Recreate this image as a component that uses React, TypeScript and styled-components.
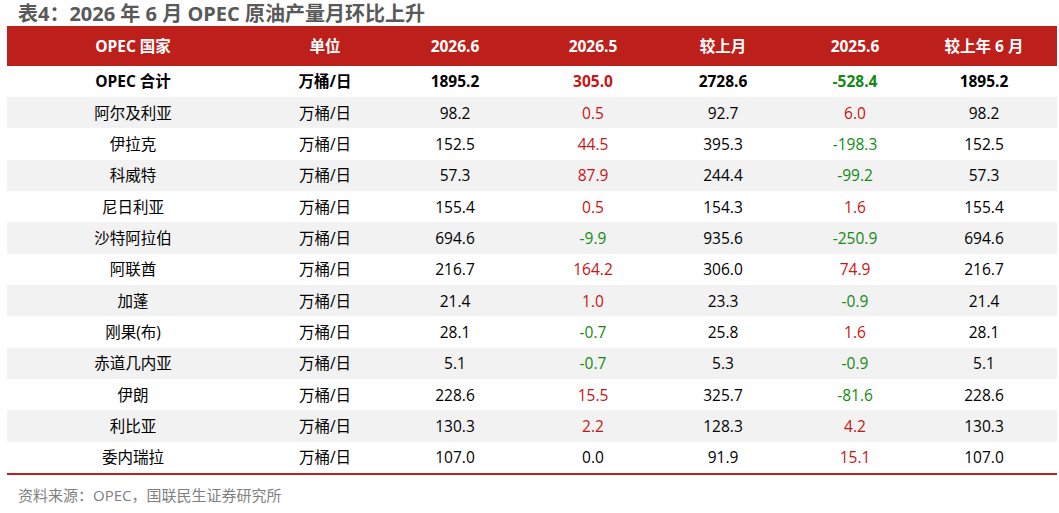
import styled, { createGlobalStyle } from 'styled-components';

const GlobalStyle = createGlobalStyle`
  html, body {
    margin: 0;
    padding: 0;
    background: #ffffff;
  }
  body {
    font-family: "Open Sans", "Noto Sans CJK SC", sans-serif;
  }
`;

const Page = styled.div`
  width: 1059px;
  height: 513px;
  padding: 2px 2px 0 7px;
  box-sizing: border-box;
`;

const Title = styled.h1`
  margin: 0 0 0 11px;
  height: 24px;
  font-size: 20px;
  line-height: 24px;
  font-weight: 700;
  color: #595959;
  white-space: nowrap;
`;

const Table = styled.div`
  width: 1050px;
  border-bottom: 2px solid #c0201b;
`;

const Row = styled.div<{ $shade?: boolean; $head?: boolean }>`
  display: grid;
  grid-template-columns: 252px 132px 128px 148px 112px 152px 106px;
  padding-right: 20px;
  align-items: center;
  height: ${p => (p.$head ? '39.5px' : '31.35px')};
  background: ${p => (p.$head ? '#bd201b' : p.$shade ? '#f2f2f2' : '#ffffff')};
  color: ${p => (p.$head ? '#ffffff' : '#000000')};
  font-weight: ${p => (p.$head ? 700 : 400)};
`;

type Tone = 'up' | 'down' | 'plain';

const Cell = styled.div<{ $tone?: Tone; $bold?: boolean }>`
  text-align: center;
  font-size: 15.5px;
  line-height: 20px;
  white-space: nowrap;
  font-weight: ${p => (p.$bold ? 700 : 'inherit')};
  color: ${p => (p.$tone === 'up' ? '#c81414' : p.$tone === 'down' ? '#138a13' : 'inherit')};
`;

const Source = styled.div`
  margin: 10px 0 0 11px;
  font-size: 15px;
  line-height: 20px;
  color: #7f7f7f;
`;

const headers = ['OPEC 国家', '单位', '2026.6', '2026.5', '较上月', '2025.6', '较上年 6 月'];

type Line = [string, string, string, string, string, string];

const total: Line = ['OPEC 合计', '1895.2', '305.0', '2728.6', '-528.4', '1895.2'];

const rows: Line[] = [
  ['阿尔及利亚', '98.2', '0.5', '92.7', '6.0', '98.2'],
  ['伊拉克', '152.5', '44.5', '395.3', '-198.3', '152.5'],
  ['科威特', '57.3', '87.9', '244.4', '-99.2', '57.3'],
  ['尼日利亚', '155.4', '0.5', '154.3', '1.6', '155.4'],
  ['沙特阿拉伯', '694.6', '-9.9', '935.6', '-250.9', '694.6'],
  ['阿联酋', '216.7', '164.2', '306.0', '74.9', '216.7'],
  ['加蓬', '21.4', '1.0', '23.3', '-0.9', '21.4'],
  ['刚果(布)', '28.1', '-0.7', '25.8', '1.6', '28.1'],
  ['赤道几内亚', '5.1', '-0.7', '5.3', '-0.9', '5.1'],
  ['伊朗', '228.6', '15.5', '325.7', '-81.6', '228.6'],
  ['利比亚', '130.3', '2.2', '128.3', '4.2', '130.3'],
  ['委内瑞拉', '107.0', '0.0', '91.9', '15.1', '107.0'],
];

const toneOf = (v: string): Tone => {
  const n = parseFloat(v);
  if (n > 0) return 'up';
  if (n < 0) return 'down';
  return 'plain';
};

function DataRow({ line, shade, bold }: { line: Line; shade?: boolean; bold?: boolean }) {
  const [name, cur, prev, mom, ly, yoy] = line;
  return (
    <Row $shade={shade}>
      <Cell $bold={bold}>{name}</Cell>
      <Cell $bold={bold}>万桶/日</Cell>
      <Cell $bold={bold}>{cur}</Cell>
      <Cell $bold={bold} $tone={toneOf(prev)}>{prev}</Cell>
      <Cell $bold={bold}>{mom}</Cell>
      <Cell $bold={bold} $tone={toneOf(ly)}>{ly}</Cell>
      <Cell $bold={bold}>{yoy}</Cell>
    </Row>
  );
}

export default function App() {
  return (
    <>
      <GlobalStyle />
      <Page>
        <Title>表4：2026 年 6 月 OPEC 原油产量月环比上升</Title>
        <Table>
          <Row $head>
            {headers.map(h => (
              <Cell key={h}>{h}</Cell>
            ))}
          </Row>
          <DataRow line={total} bold />
          {rows.map((r, i) => (
            <DataRow key={r[0]} line={r} shade={i % 2 === 0} />
          ))}
        </Table>
        <Source>资料来源：OPEC，国联民生证券研究所</Source>
      </Page>
    </>
  );
}
